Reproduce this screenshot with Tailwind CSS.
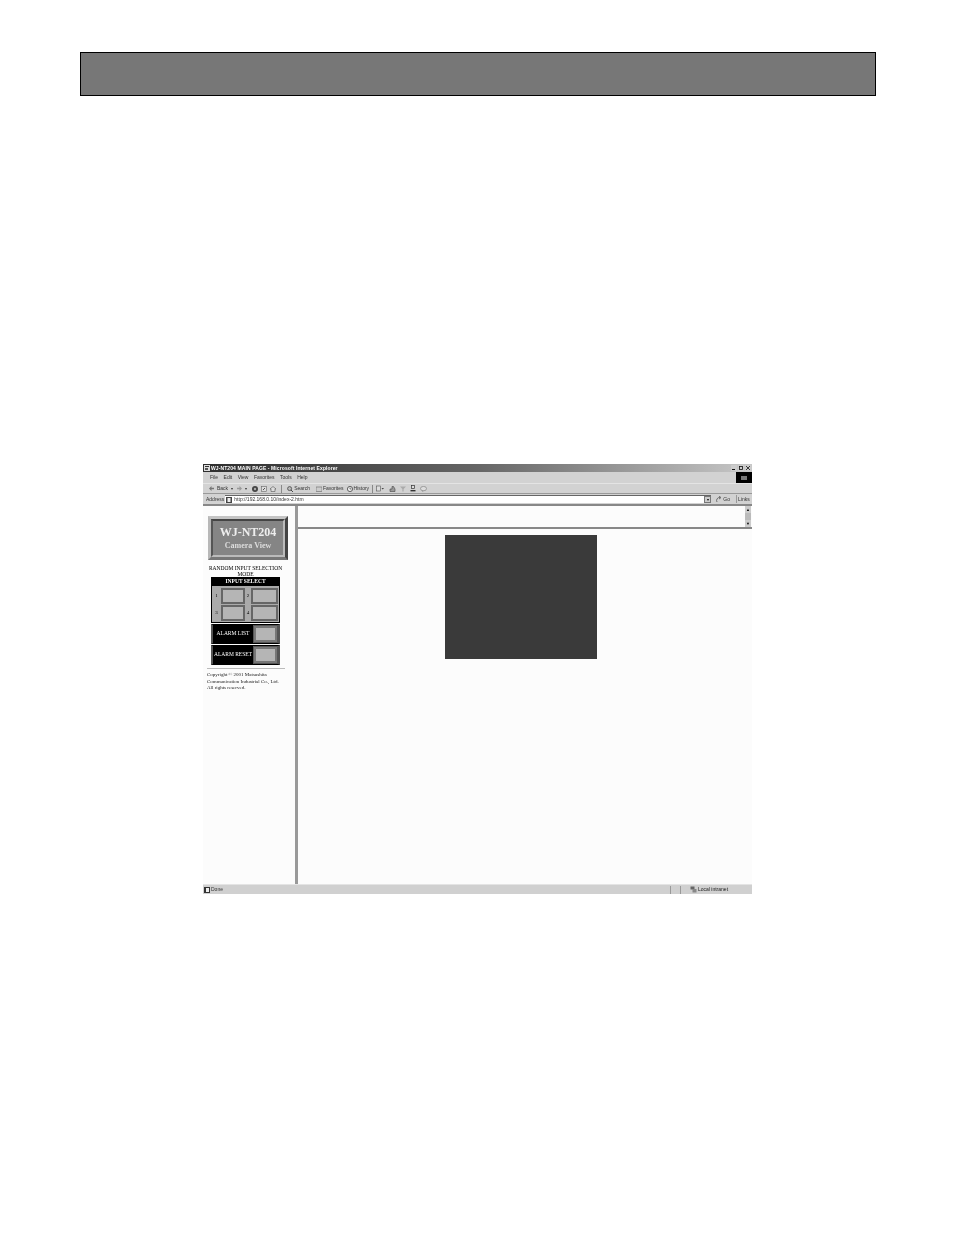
<!DOCTYPE html>
<html><head><meta charset="utf-8"><title>WJ-NT204</title>
<script src="https://cdn.jsdelivr.net/npm/@tailwindcss/browser@4"></script></head>
<body class="bg-white">
<div class="w-[954px] h-[1237px] overflow-hidden pt-[52px] font-['Liberation_Sans',sans-serif]">
  <div class="ml-[80px] w-[796px] h-[44px] border border-black bg-[#777777]"></div>
  <div class="ml-[203px] mt-[368px] w-[549px] h-[430px] flex flex-col bg-[#d0d0d0] text-[5px] leading-none text-[#333] blur-[0.4px]">
    <!-- title bar -->
    <div class="h-[8px] shrink-0 flex items-center pl-[1px] pr-[1px] bg-gradient-to-r from-[#2e2e2e] via-[#666] to-[#c8c8c8] text-white">
      <svg class="w-[6px] h-[6px] mr-[1px]" viewBox="0 0 6 6"><rect width="6" height="6" fill="#ddd"/><rect x="1" y="1" width="4" height="1" fill="#333"/><rect x="1" y="3" width="3" height="2" fill="#555"/></svg>
      <span class="font-bold text-[5px] tracking-[0.1px]">WJ-NT204 MAIN PAGE - Microsoft Internet Explorer</span>
      <div class="ml-auto flex gap-[1px]">
        <svg class="w-[6px] h-[6px]" viewBox="0 0 6 6"><rect width="6" height="6" fill="#ccc"/><rect x="1" y="4" width="3" height="1" fill="#111"/></svg>
        <svg class="w-[6px] h-[6px]" viewBox="0 0 6 6"><rect width="6" height="6" fill="#ccc"/><rect x="1.5" y="1.5" width="3" height="3" fill="none" stroke="#111" stroke-width="0.8"/></svg>
        <svg class="w-[6px] h-[6px]" viewBox="0 0 6 6"><rect width="6" height="6" fill="#ccc"/><path d="M1 1 L5 5 M5 1 L1 5" stroke="#111" stroke-width="0.8"/></svg>
      </div>
    </div>
    <!-- menu -->
    <div class="h-[12px] shrink-0 flex items-center pl-[7px] bg-[#d2d2d2] border-b border-[#e4e4e4]">
      <div class="flex gap-[5.5px] text-[5px]"><span>File</span><span>Edit</span><span>View</span><span>Favorites</span><span>Tools</span><span>Help</span></div>
      <div class="ml-auto w-[16px] h-[11px] bg-black flex items-center justify-center"><span class="w-[6px] h-[4px] bg-[#777]"></span></div>
    </div>
    <!-- toolbar -->
    <div class="h-[10px] shrink-0 flex items-center pl-[6px] bg-[#d2d2d2] text-[5px] gap-[3px] border-b border-[#999]">
      <svg class="w-[5px] h-[5px]" viewBox="0 0 6 6"><path d="M0 3 L3 0 V2 H6 V4 H3 V6Z" fill="#777"/></svg><span>Back</span><span class="text-[4px]">▾</span>
      <svg class="w-[5px] h-[5px] ml-[1px]" viewBox="0 0 6 6"><path d="M6 3 L3 0 V2 H0 V4 H3 V6Z" fill="#999"/></svg><span class="text-[4px]">▾</span>
      <svg class="w-[6px] h-[6px] ml-[2px]" viewBox="0 0 6 6"><circle cx="3" cy="3" r="3" fill="#444"/><circle cx="3" cy="3" r="1.2" fill="#aaa"/></svg>
      <svg class="w-[6px] h-[6px]" viewBox="0 0 6 6"><rect x="0.5" y="0.5" width="5" height="5" fill="#ddd" stroke="#666" stroke-width="0.6"/><path d="M2 4 L4 2" stroke="#333" stroke-width="0.8"/></svg>
      <svg class="w-[6px] h-[6px]" viewBox="0 0 6 6"><path d="M3 0.5 L6 3 H5 V5.5 H1 V3 H0Z" fill="#ddd" stroke="#555" stroke-width="0.6"/></svg>
      <span class="w-px h-[8px] bg-[#888] ml-[2px]"></span>
      <svg class="w-[6px] h-[6px] ml-[2px]" viewBox="0 0 6 6"><circle cx="2.6" cy="2.6" r="2" fill="#bbb" stroke="#444" stroke-width="0.8"/><path d="M4 4 L6 6" stroke="#444"/></svg><span class="-ml-[2px]">Search</span>
      <svg class="w-[6px] h-[6px] ml-[3px]" viewBox="0 0 6 6"><rect y="1" width="6" height="4.5" fill="#ccc" stroke="#666" stroke-width="0.6"/></svg><span class="-ml-[2px]">Favorites</span>
      <svg class="w-[6px] h-[6px]" viewBox="0 0 6 6"><circle cx="3" cy="3" r="2.6" fill="#eee" stroke="#444" stroke-width="0.8"/><path d="M3 1.5 V3 H4.5" stroke="#333" stroke-width="0.6" fill="none"/></svg><span class="-ml-[2px]">History</span>
      <span class="w-px h-[8px] bg-[#888]"></span>
      <svg class="w-[8px] h-[7px]" viewBox="0 0 8 7"><rect x="0.5" y="1" width="4" height="5" fill="#ddd" stroke="#555" stroke-width="0.6"/><path d="M5.5 3 H8 L6.7 4.5Z" fill="#444"/></svg>
      <svg class="w-[7px] h-[6px] ml-[2px]" viewBox="0 0 7 6"><path d="M1 5.5 H6 V3 L4.5 0.5 H3 V3 H1Z" fill="#999" stroke="#444" stroke-width="0.6"/></svg>
      <svg class="w-[6px] h-[6px] ml-[1px]" viewBox="0 0 6 6"><path d="M0 0.5 H6 L3.6 3 V5.5 H2.4 V3Z" fill="#aaa"/></svg>
      <svg class="w-[6px] h-[7px] ml-[1px]" viewBox="0 0 6 7"><rect x="1.5" y="0.5" width="3" height="3" fill="#ddd" stroke="#333" stroke-width="0.7"/><rect x="0.5" y="5" width="5" height="1.4" fill="#333"/></svg>
      <svg class="w-[7px] h-[6px] ml-[1px]" viewBox="0 0 7 6"><ellipse cx="3.5" cy="2.6" rx="3" ry="2.2" fill="#ddd" stroke="#777" stroke-width="0.6"/><path d="M2 4.5 L2 6 L4 4.6" fill="#999"/></svg>
    </div>
    <!-- address -->
    <div class="h-[10px] shrink-0 flex items-center pl-[3px] bg-[#d2d2d2] text-[5px]">
      <span>Address</span>
      <div class="ml-[1px] w-[486px] h-[8px] bg-white border-t border-[#666] flex items-center pl-[1px]">
        <svg class="w-[6px] h-[6px] mr-[2px]" viewBox="0 0 6 6"><rect width="6" height="6" fill="#444"/><rect x="1.5" y="1" width="3" height="4" fill="#eee"/></svg><span>http://192.168.0.10/index-2.htm</span>
        <span class="ml-auto w-[7px] h-[7px] bg-[#ccc] border border-[#777] flex items-center justify-center text-[4px] text-black">▾</span>
      </div>
      <svg class="w-[6px] h-[6px] ml-[5px]" viewBox="0 0 6 6"><path d="M1 6 A3 3 0 0 1 4 1.5 M3 0 L5 1.6 L3 3" stroke="#555" stroke-width="0.8" fill="none"/></svg><span class="ml-[1px]">Go</span>
      <span class="w-px h-[8px] bg-[#999] ml-[6px]"></span><span class="ml-[1px]">Links</span>
    </div>
    <!-- content -->
    <div class="h-[380px] shrink-0 flex border-t-2 border-[#888] bg-[#fcfcfc]">
      <!-- left frame -->
      <div class="w-[92px] shrink-0 flex flex-col items-start font-['Liberation_Serif',serif] text-black bg-[#fcfcfc]">
        <div class="mt-[10px] ml-[5px] w-[80px] h-[44px] border-[3px] border-t-[#c4c4c4] border-l-[#b8b8b8] border-r-[#444] border-b-[#777] bg-[#8a8a8a]">
          <div class="h-full border-2 border-t-[#444] border-l-[#555] border-r-[#bbb] border-b-[#bbb] bg-[#858585] flex flex-col items-center justify-center">
            <span class="text-[12px] font-bold leading-[13px] text-[#eee]">WJ-NT204</span>
            <span class="mt-[2px] text-[8px] font-bold leading-[9px] text-[#ddd]">Camera View</span>
          </div>
        </div>
        <div class="mt-[5px] ml-[2.5px] w-[80px] text-[5.5px] leading-[6px] text-center whitespace-nowrap">RANDOM INPUT SELECTION<br>MODE</div>
        <div class="ml-[8px] w-[69px] bg-[#555] border border-black">
          <div class="h-[8px] bg-black text-white text-[5.5px] font-bold flex items-center justify-center">INPUT SELECT</div>
          <div class="grid grid-cols-2 gap-x-[1px] bg-[#aaa] p-[1px]">
            <div class="flex items-center h-[17px] text-[5px]"><span class="w-[7px] text-center mr-[1px]">1</span><span class="flex-1 h-[16px] bg-[#b5b5b5] border-2 border-[#666]"></span></div>
            <div class="flex items-center h-[17px] text-[5px]"><span class="w-[4px] text-center mr-[1px]">2</span><span class="flex-1 h-[16px] bg-[#b5b5b5] border-2 border-[#666]"></span></div>
            <div class="flex items-center h-[17px] text-[5px]"><span class="w-[7px] text-center mr-[1px]">3</span><span class="flex-1 h-[16px] bg-[#b5b5b5] border-2 border-[#666]"></span></div>
            <div class="flex items-center h-[17px] text-[5px]"><span class="w-[4px] text-center mr-[1px]">4</span><span class="flex-1 h-[16px] bg-[#b5b5b5] border-2 border-[#666]"></span></div>
          </div>
        </div>
        <div class="mt-[1px] ml-[8px] w-[69px] h-[20px] flex bg-[#555] border-y border-black border-x-2 border-x-[#555]">
          <div class="w-[40px] bg-black text-white text-[5.5px] flex items-center justify-center whitespace-nowrap">ALARM LIST</div>
          <span class="flex-1 m-[1px] bg-[#b5b5b5] border-2 border-[#777]"></span>
        </div>
        <div class="ml-[8px] w-[69px] h-[20px] mt-[1px] flex bg-[#555] border-y border-black border-x-2 border-x-[#555]">
          <div class="w-[40px] bg-black text-white text-[5.5px] flex items-center justify-center whitespace-nowrap">ALARM RESET</div>
          <span class="flex-1 m-[1px] bg-[#b5b5b5] border-2 border-[#777]"></span>
        </div>
        <div class="mt-[3px] ml-[4px] w-[78px] h-px bg-[#bbb]"></div>
        <div class="mt-[3px] ml-[4px] w-[84px] text-[5px] leading-[6.5px] text-[#222] whitespace-nowrap">Copyright © 2001 Matsushita<br>Communication Industrial Co., Ltd.<br>All rights reserved.</div>
      </div>
      <!-- divider -->
      <div class="w-[3px] shrink-0 bg-[#999]"></div>
      <!-- right frames -->
      <div class="flex-1 flex flex-col">
        <div class="h-[23px] shrink-0 flex justify-end bg-[#fcfcfc] border-b-2 border-[#888]">
          <div class="w-[6px] mr-[1px] flex flex-col bg-[#ddd]">
            <span class="h-[7px] bg-[#ccc] text-[4px] flex items-center justify-center text-black">▲</span>
            <span class="flex-1 bg-[#bbb]"></span>
            <span class="h-[7px] bg-[#ccc] text-[4px] flex items-center justify-center text-black">▼</span>
          </div>
        </div>
        <div class="flex-1 bg-[#fcfcfc] pt-[6px] pl-[147px]">
          <div class="w-[152px] h-[124px] bg-[#3a3a3a]"></div>
        </div>
      </div>
    </div>
    <!-- status -->
    <div class="h-[10px] shrink-0 flex items-center pl-[1px] bg-[#d0d0d0] border-t border-[#e4e4e4] text-[5px]">
      <svg class="w-[6px] h-[6px] mr-[1px]" viewBox="0 0 6 6"><rect width="6" height="6" fill="#333"/><rect x="2" y="1" width="3" height="4" fill="#eee"/></svg><span>Done</span>
      <span class="ml-auto w-px h-[8px] bg-[#999]"></span>
      <span class="ml-[9px] w-px h-[8px] bg-[#999]"></span>
      <svg class="w-[7px] h-[7px] ml-[9px] mr-[1px]" viewBox="0 0 7 7"><rect x="0.5" y="0.5" width="4" height="3" fill="#666"/><rect x="2.5" y="3" width="4" height="3.5" fill="#888"/></svg>
      <span class="w-[54px] text-[#222]">Local intranet</span>
    </div>
  </div>
</div>
</body></html>
